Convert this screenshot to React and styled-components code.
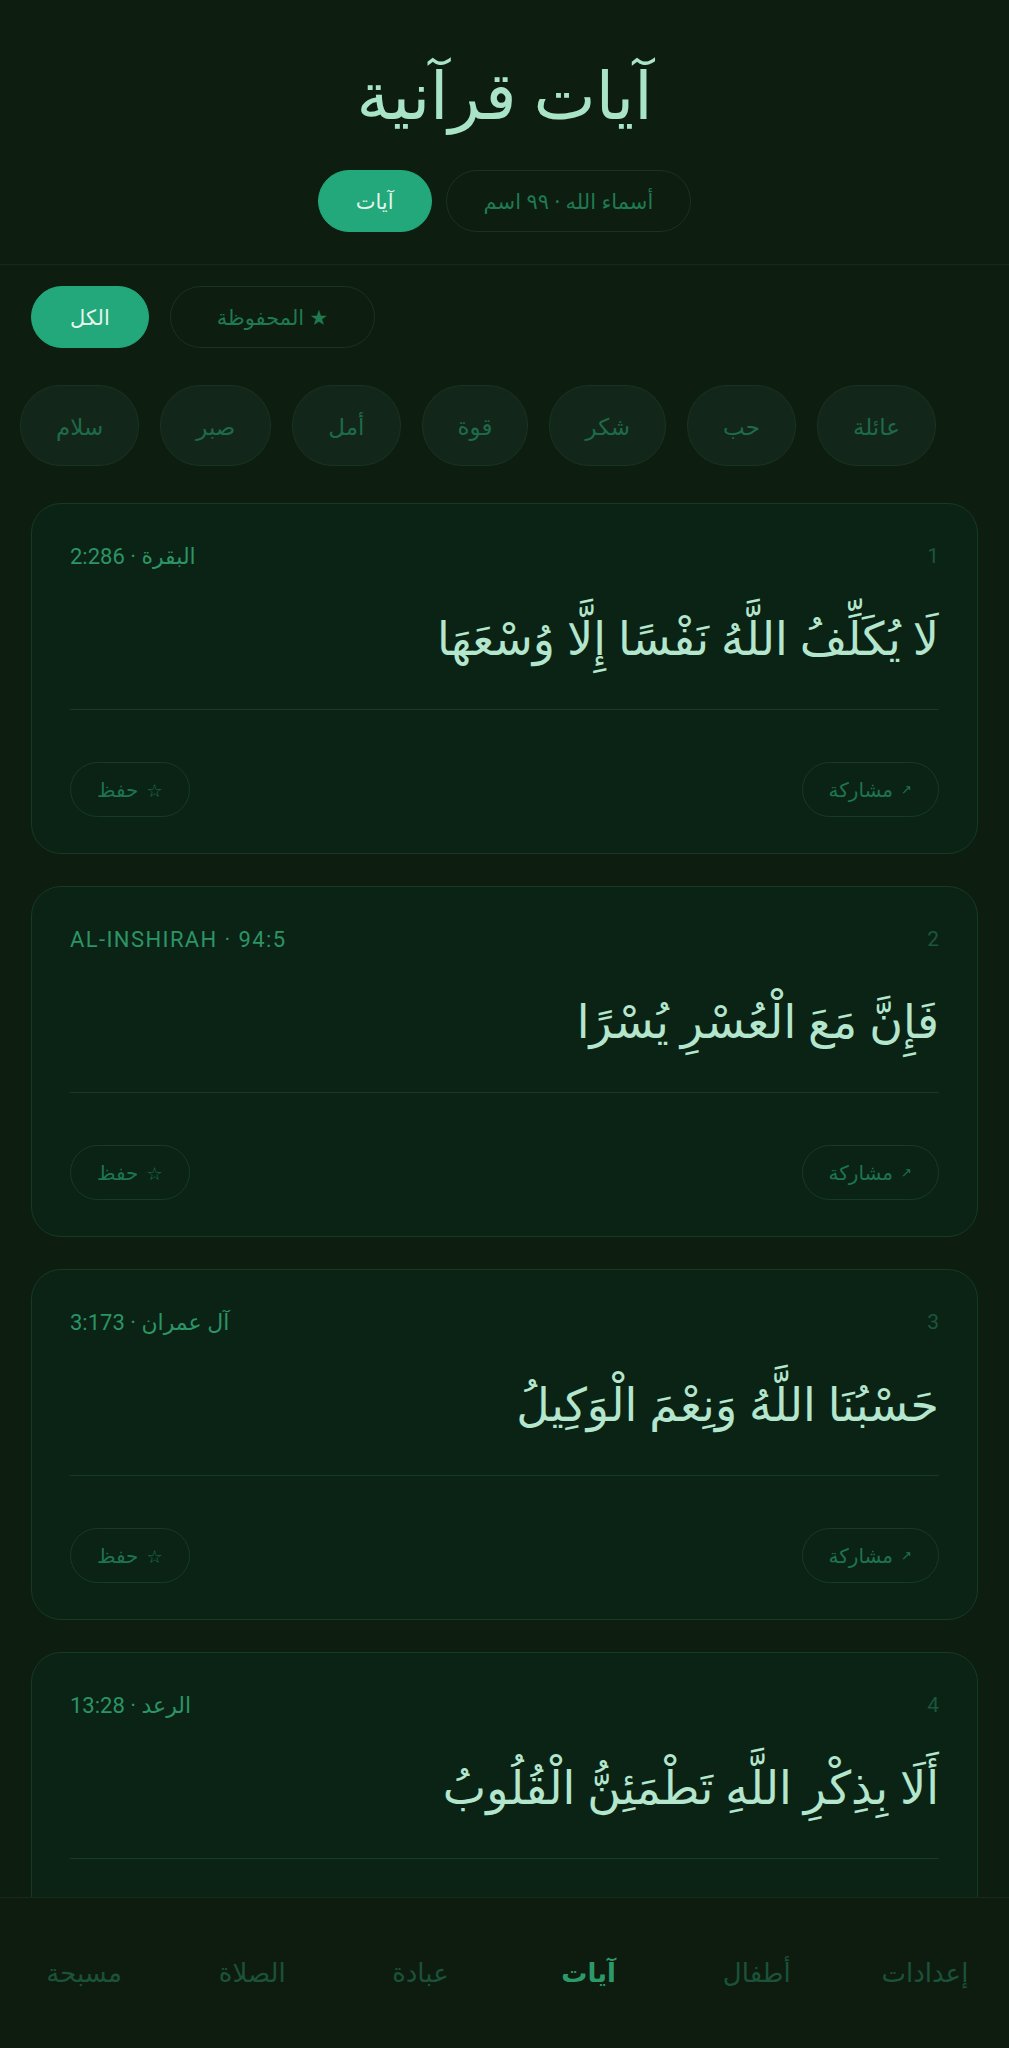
import React from "react";
import styled, { createGlobalStyle } from "styled-components";

// page-wide resets and base font
const GlobalStyle = createGlobalStyle`
  html, body {
    margin: 0;
    padding: 0;
    background: #0d1d10;
  }
  body {
    font-family: "Noto Sans", "DejaVu Sans", Roboto, sans-serif;
    color: #b3e6cd;
  }
  * {
    box-sizing: border-box;
  }
`;

const Page = styled.div`
  direction: rtl;
  height: 100vh;
  display: flex;
  flex-direction: column;
  overflow: hidden;
`;

const Main = styled.main`
  flex: 1;
  overflow: hidden;
`;

const Header = styled.header`
  display: flex;
  flex-direction: column;
  align-items: center;
  padding: 50px 0 32px;
  border-bottom: 1px solid #16291a;
`;

const Title = styled.h1`
  margin: 0;
  font-size: 66px;
  font-weight: 400;
  line-height: 86px;
  color: #a9e4c6;
`;

const TabRow = styled.div`
  display: flex;
  gap: 14px;
  margin-top: 34px;
`;

const Pill = styled.button`
  height: 62px;
  padding: 0 ${(p) => p.$pad || 32}px;
  border-radius: 31px;
  border: 1px solid ${(p) => (p.$active ? "#22a87a" : "#1a3222")};
  background: ${(p) => (p.$active ? "#22a87a" : "transparent")};
  color: ${(p) => (p.$active ? "#e3f6ec" : "#1f7a52")};
  font-family: inherit;
  font-size: 21px;
  display: flex;
  align-items: center;
  justify-content: center;
  cursor: pointer;
`;

const FilterRow = styled.div`
  direction: ltr;
  display: flex;
  gap: 21px;
  padding: 21px 31px 0;
`;

const ChipRow = styled.div`
  display: flex;
  gap: 21px;
  padding: 37px 73px 0 0;
  overflow: hidden;
`;

const Chip = styled.button`
  flex: 0 0 auto;
  height: 81px;
  padding: 0 35px;
  border-radius: 40px;
  border: 1px solid #1a3320;
  background: #13261a;
  color: #1d6b48;
  font-family: inherit;
  font-size: 23px;
`;

const CardList = styled.div`
  display: flex;
  flex-direction: column;
  gap: 32px;
  padding: 37px 31px 0;
`;

const Card = styled.article`
  flex: 0 0 auto;
  height: 351px;
  border-radius: 30px;
  border: 1px solid #173a24;
  background: #0a2315;
  padding: 38px 38px 36px;
  display: flex;
  flex-direction: column;
`;

const CardHead = styled.div`
  display: flex;
  justify-content: space-between;
  align-items: center;
  height: 30px;
`;

const Num = styled.span`
  font-family: Roboto, "Noto Sans", sans-serif;
  font-size: 21px;
  color: #1c563c;
`;

const Ref = styled.span`
  font-family: Roboto, "Noto Sans", "DejaVu Sans", sans-serif;
  font-size: 22px;
  letter-spacing: ${(p) => (p.$latin ? "1.4px" : "0")};
  color: #2c9466;
`;

const Verse = styled.p`
  margin: 32px 0 0;
  font-size: 46px;
  line-height: 70px;
  color: #b4e6cd;
`;

const Divider = styled.hr`
  margin: 37px 0 0;
  border: 0;
  border-top: 1px solid #173a24;
`;

const ActionRow = styled.div`
  display: flex;
  justify-content: space-between;
  margin-top: 52px;
`;

const Action = styled.button`
  height: 55px;
  padding: 0 ${(p) => p.$pad || 24}px;
  border-radius: 28px;
  border: 1px solid #173a24;
  background: transparent;
  color: #1e7450;
  font-family: inherit;
  font-size: 20px;
  display: flex;
  align-items: center;
  gap: 8px;
`;

const Glyph = styled.span`
  font-size: ${(p) => p.$size || 16}px;
  line-height: 1;
`;

const BottomNav = styled.nav`
  flex: 0 0 151px;
  direction: rtl;
  display: grid;
  grid-template-columns: repeat(6, 1fr);
  align-items: center;
  background: #0e1c10;
  border-top: 1px solid #17291b;
`;

const NavItem = styled.span`
  text-align: center;
  font-size: 26px;
  font-weight: ${(p) => (p.$active ? 700 : 400)};
  color: ${(p) => (p.$active ? "#2c9a68" : "#1b5238")};
  padding-bottom: 2px;
`;

const categories = ["عائلة", "حب", "شكر", "قوة", "أمل", "صبر", "سلام"];

const verses = [
  { n: 1, ref: "البقرة · 2:286", text: "لَا يُكَلِّفُ اللَّهُ نَفْسًا إِلَّا وُسْعَهَا" },
  { n: 2, ref: "AL-INSHIRAH · 94:5", latin: true, text: "فَإِنَّ مَعَ الْعُسْرِ يُسْرًا" },
  { n: 3, ref: "آل عمران · 3:173", text: "حَسْبُنَا اللَّهُ وَنِعْمَ الْوَكِيلُ" },
  { n: 4, ref: "الرعد · 13:28", text: "أَلَا بِذِكْرِ اللَّهِ تَطْمَئِنُّ الْقُلُوبُ" }
];

const navItems = ["إعدادات", "أطفال", "آيات", "عبادة", "الصلاة", "مسبحة"];

export default function App() {
  return (
    <Page>
      <GlobalStyle />
      <Main>
        <Header>
          <Title>آيات قرآنية</Title>
          <TabRow>
            <Pill $pad={37}>أسماء الله · ٩٩ اسم</Pill>
            <Pill $active $pad={37}>آيات</Pill>
          </TabRow>
        </Header>

        <FilterRow>
          <Pill $active $pad={38}>الكل</Pill>
          <Pill $pad={46}>
            <span dir="rtl">★ المحفوظة</span>
          </Pill>
        </FilterRow>

        <ChipRow>
          {categories.map((c) => (
            <Chip key={c}>{c}</Chip>
          ))}
        </ChipRow>

        <CardList>
          {verses.map((v) => (
            <Card key={v.n}>
              <CardHead>
                <Num>{v.n}</Num>
                <Ref $latin={v.latin}>{v.ref}</Ref>
              </CardHead>
              <Verse>{v.text}</Verse>
              <Divider />
              <ActionRow>
                <Action $pad={26}>
                  <Glyph $size={13}>↗</Glyph>
                  مشاركة
                </Action>
                <Action $pad={26}>
                  <Glyph $size={18}>☆</Glyph>
                  حفظ
                </Action>
              </ActionRow>
            </Card>
          ))}
        </CardList>
      </Main>

      <BottomNav>
        {navItems.map((n) => (
          <NavItem key={n} $active={n === "آيات"}>
            {n}
          </NavItem>
        ))}
      </BottomNav>
    </Page>
  );
}
